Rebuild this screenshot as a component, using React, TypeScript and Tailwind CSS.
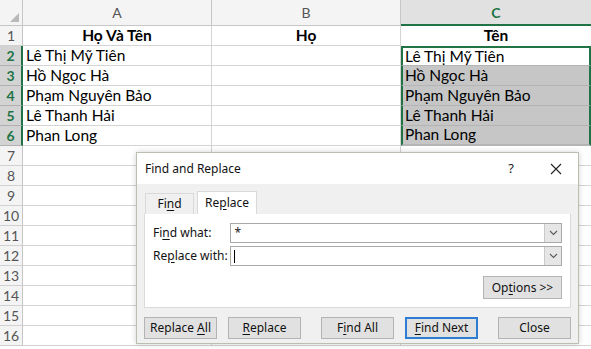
import React from 'react';

const rows: { a: string; b: string; c: string }[] = [
  { a: 'Họ Và Tên', b: 'Họ', c: 'Tên' },
  { a: 'Lê Thị Mỹ Tiên', b: '', c: 'Lê Thị Mỹ Tiên' },
  { a: 'Hồ Ngọc Hà', b: '', c: 'Hồ Ngọc Hà' },
  { a: 'Phạm Nguyên Bảo', b: '', c: 'Phạm Nguyên Bảo' },
  { a: 'Lê Thanh Hải', b: '', c: 'Lê Thanh Hải' },
  { a: 'Phan Long', b: '', c: 'Phan Long' },
];

const cellFont = { fontFamily: 'Lato, "Noto Sans", sans-serif' };
const uiFont = { fontFamily: '"Noto Sans", "Open Sans", sans-serif' };

const U = ({ children }: { children: React.ReactNode }) => (
  <span className="underline underline-offset-2">{children}</span>
);

const Chevron = () => (
  <svg width="9" height="6" viewBox="0 0 9 6">
    <path d="M1 1 L4.5 4.5 L8 1" fill="none" stroke="#5a5a5a" strokeWidth="1.1" />
  </svg>
);

const Combo = ({ value, caret }: { value?: string; caret?: boolean }) => (
  <div className="flex h-[20px] w-[334px] border border-[#a9a9a9] bg-white">
    <div className="flex flex-1 items-center pl-[3px] text-[12px] text-[#222]">
      {value}
      {caret && <span className="h-[13px] w-px bg-black" />}
    </div>
    <div className="flex w-[17px] items-center justify-center border-l border-[#c9c9c9] bg-[#e6e6e6]">
      <Chevron />
    </div>
  </div>
);

const Btn = ({ children, primary }: { children: React.ReactNode; primary?: boolean }) => (
  <div
    className={
      'flex h-[22px] w-[73px] items-center justify-center bg-[#e1e1e1] text-[12px] text-[#111] ' +
      (primary ? 'border-2 border-[#2d7dd2]' : 'border border-[#b4b4b4]')
    }
  >
    <span>{children}</span>
  </div>
);

function Sheet() {
  const rowCount = 17;
  return (
    <div className="grid grid-cols-[23px_189px_189px_190px] grid-rows-[26px] auto-rows-[20px]" style={cellFont}>
      {/* header */}
      <div className="relative border-b border-r border-[#c6c6c6] bg-[#f4f4f4]">
        <div className="absolute bottom-[3px] right-[3px] h-0 w-0 border-b-[9px] border-l-[9px] border-b-[#b9b9b9] border-l-transparent" />
      </div>
      <div className="flex items-center justify-center border-b border-r border-[#c6c6c6] bg-[#f4f4f4] text-[14px] text-[#555]">A</div>
      <div className="flex items-center justify-center border-b border-r border-[#c6c6c6] bg-[#f4f4f4] text-[14px] text-[#555]">B</div>
      <div className="flex items-center justify-center border-b-2 border-[#217346] bg-[#e1e1e1] text-[14px] font-bold text-[#217346]">C</div>

      {Array.from({ length: rowCount - 1 }, (_, i) => {
        const n = i + 1;
        const r = rows[i];
        const sel = n >= 2 && n <= 6;
        return (
          <React.Fragment key={n}>
            <div
              className={
                'flex items-center justify-center border-b text-[14px] ' +
                (sel
                  ? 'border-[#b0b0b0] border-r-2 border-r-[#217346] bg-[#d3d3d3] font-bold text-[#217346]'
                  : 'border-[#d0d0d0] border-r border-r-[#c6c6c6] bg-[#f4f4f4] text-[#555]')
              }
            >
              {n}
            </div>
            <div
              className={
                'flex items-center border-b border-r border-[#d4d4d4] px-[3px] text-[15.5px] text-black ' +
                (n === 1 ? 'justify-center font-bold' : '')
              }
            >
              {r?.a}
            </div>
            <div
              className={
                'flex items-center border-b border-r border-[#d4d4d4] px-[3px] text-[15.5px] text-black ' +
                (n === 1 ? 'justify-center font-bold' : '')
              }
            >
              {r?.b}
            </div>
            <div
              className={
                'flex items-center px-[2px] text-[15.5px] text-black ' +
                (n === 1
                  ? 'justify-center font-bold border-b-0 '
                  : sel
                    ? 'border-x-2 border-[#217346] '
                    : 'border-b border-[#d4d4d4] ') +
                (n === 2 ? 'border-t-2 border-t-[#217346] bg-white ' : '') +
                (n >= 3 && n <= 6 ? 'border-b border-b-[#b4b4b4] bg-[#c6c6c6] ' : '') +
                (n === 6 ? 'border-b-2 border-b-[#217346] ' : '') +
                (n === 2 ? 'border-b border-b-[#b4b4b4] ' : '')
              }
            >
              {r?.c}
            </div>
          </React.Fragment>
        );
      })}
    </div>
  );
}

function Dialog() {
  return (
    <div
      className="absolute left-[136px] top-[152px] flex h-[192px] w-[443px] flex-col border border-[#b9c0b0] bg-[#f0f0f0] shadow-[0_0_6px_rgba(0,0,0,0.18)]"
      style={uiFont}
    >
      <div className="flex h-[31px] items-center bg-white pl-[8px] pr-[16px]">
        <span className="text-[12px] text-[#111]">Find and Replace</span>
        <span className="ml-auto mr-[36px] text-[13px] text-[#222]">?</span>
        <svg width="12" height="12" viewBox="0 0 12 12">
          <path d="M1 1 L11 11 M11 1 L1 11" stroke="#222" strokeWidth="1.1" />
        </svg>
      </div>
      <div className="flex flex-1 flex-col px-[7px] pt-[7px]">
        <div className="flex items-end pl-[1px]">
          <div className="flex h-[21px] w-[49px] items-center justify-center border border-b-0 border-[#d9d9d9] bg-[#f0f0f0] text-[12px] text-[#111]">
            <span>
              Fi<U>n</U>d
            </span>
          </div>
          <div className="ml-[3px] flex h-[23px] w-[60px] items-center justify-center border border-b-0 border-[#d9d9d9] bg-white text-[12px] text-[#111]">
            <span>
              Re<U>p</U>lace
            </span>
          </div>
        </div>
        <div className="flex h-[94px] w-[427px] flex-col border border-t-0 border-[#d9d9d9] bg-white px-[8px] pt-[9px]">
          <div className="flex items-center">
            <span className="w-[78px] text-[12px] text-[#111]">
              Fi<U>n</U>d what:
            </span>
            <Combo value="*" />
          </div>
          <div className="mt-[3px] flex items-center">
            <span className="w-[78px] text-[12px] text-[#111]">
              Re<U>p</U>lace with:
            </span>
            <Combo caret />
          </div>
          <div className="mt-[10px] flex justify-end">
            <div className="flex h-[23px] w-[79px] items-center justify-center border border-[#b4b4b4] bg-[#e1e1e1] text-[12px] text-[#111]">
              <span>
                Op<U>t</U>ions &gt;&gt;
              </span>
            </div>
          </div>
        </div>
        <div className="mt-[9px] flex">
          <Btn>
            Replace <U>A</U>ll
          </Btn>
          <div className="ml-[11px]">
            <Btn>
              <U>R</U>eplace
            </Btn>
          </div>
          <div className="ml-[20px]">
            <Btn>
              F<U>i</U>nd All
            </Btn>
          </div>
          <div className="ml-[11px]">
            <Btn primary>
              <U>F</U>ind Next
            </Btn>
          </div>
          <div className="ml-[20px]">
            <Btn>Close</Btn>
          </div>
        </div>
      </div>
    </div>
  );
}

export default function App() {
  return (
    <div className="relative h-[349px] w-[591px] overflow-hidden bg-white">
      <Sheet />
      <Dialog />
    </div>
  );
}
